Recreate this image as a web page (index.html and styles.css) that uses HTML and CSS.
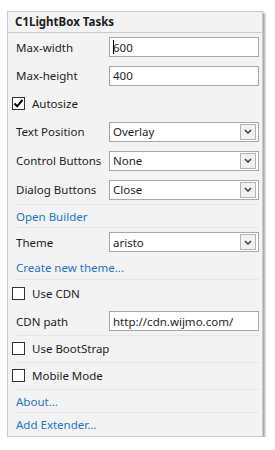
FILE: index.html
```html
<!DOCTYPE html>
<html lang="en">

<head>
  <meta charset="UTF-8">
  <meta name="viewport" content="width=device-width, initial-scale=1.0">
  <title>C1LightBox Tasks</title>
  <link rel="stylesheet" href="styles.css">
</head>

<body>
  <div class="panel">
    <div class="panel-header">C1LightBox Tasks</div>

    <!-- Size and buttons -->
    <div class="group">
      <div class="row row-first">
        <span class="label">Max-width</span>
        <div class="textbox"><span class="caret"></span>600</div>
      </div>
      <div class="row">
        <span class="label">Max-height</span>
        <div class="textbox">400</div>
      </div>
      <div class="row row-check row-autosize">
        <span class="checkbox checked">
          <svg width="11" height="11" viewBox="0 0 11 11"><path d="M1.5 5.5 L4.2 8.3 L9.5 1.8" fill="none" stroke="#000" stroke-width="2"/></svg>
        </span>
        <span>Autosize</span>
      </div>
      <div class="row">
        <span class="label">Text Position</span>
        <div class="select">Overlay<span class="drop"><svg width="8" height="5" viewBox="0 0 8 5"><path d="M1 1 L4 4 L7 1" fill="none" stroke="#444" stroke-width="1.6"/></svg></span></div>
      </div>
      <div class="row">
        <span class="label">Control Buttons</span>
        <div class="select">None<span class="drop"><svg width="8" height="5" viewBox="0 0 8 5"><path d="M1 1 L4 4 L7 1" fill="none" stroke="#444" stroke-width="1.6"/></svg></span></div>
      </div>
      <div class="row">
        <span class="label">Dialog Buttons</span>
        <div class="select">Close<span class="drop"><svg width="8" height="5" viewBox="0 0 8 5"><path d="M1 1 L4 4 L7 1" fill="none" stroke="#444" stroke-width="1.6"/></svg></span></div>
      </div>
    </div>

    <div class="group">
      <a class="row row-link link-builder" href="#">Open Builder</a>
    </div>

    <!-- Theme -->
    <div class="group">
      <div class="row row-theme">
        <span class="label">Theme</span>
        <div class="select">aristo<span class="drop"><svg width="8" height="5" viewBox="0 0 8 5"><path d="M1 1 L4 4 L7 1" fill="none" stroke="#444" stroke-width="1.6"/></svg></span></div>
      </div>
      <a class="row row-link link-theme" href="#">Create new theme...</a>
    </div>

    <!-- CDN -->
    <div class="group">
      <div class="row row-check row-cdn">
        <span class="checkbox"></span>
        <span>Use CDN</span>
      </div>
      <div class="row row-path">
        <span class="label">CDN path</span>
        <div class="textbox">http://cdn.wijmo.com/</div>
      </div>
    </div>

    <div class="group">
      <div class="row row-check row-single">
        <span class="checkbox"></span>
        <span>Use BootStrap</span>
      </div>
    </div>

    <div class="group">
      <div class="row row-check row-single">
        <span class="checkbox"></span>
        <span>Mobile Mode</span>
      </div>
    </div>

    <div class="group">
      <a class="row row-link link-about" href="#">About...</a>
    </div>

    <div class="group group-last">
      <a class="row row-link link-last" href="#">Add Extender...</a>
    </div>
  </div>
</body>

</html>
```

FILE: styles.css
```css
body {
  margin: 0;
  padding: 0;
  background-color: #ffffff;
  font-family: 'Noto Sans', 'Open Sans', sans-serif;
  font-size: 11.5px;
  color: #1e1e1e;
}

.panel {
  margin: 11px 0 0 7px;
  width: 256px;
  height: 426px;
  box-sizing: border-box;
  background-color: #f3f3f3;
  border: 1px solid #c9cad3;
  box-shadow: 2px 2px 2px rgba(0, 0, 0, 0.35);
  display: flex;
  flex-direction: column;
}

.panel-header {
  height: 20px;
  line-height: 20px;
  padding-left: 7px;
  font-weight: bold;
  border-bottom: 1px solid #c9cad3;
}

.group {
  margin: 0 3px 0 8px;
  border-bottom: 1px solid #e6e6e9;
  display: flex;
  flex-direction: column;
}

.group-last {
  border-bottom: none;
}

.row {
  height: 29px;
  display: flex;
  align-items: center;
}

.row-first {
  height: 28px;
}

.row-autosize {
  height: 27px;
}

.row-theme {
  height: 28px;
}

.row-path {
  height: 28px;
}

.label {
  width: 93px;
  flex-shrink: 0;
}

.textbox,
.select {
  flex: 1;
  height: 20px;
  box-sizing: border-box;
  border: 1px solid #a8a8a8;
  background-color: #ffffff;
  padding-left: 3px;
  display: flex;
  align-items: center;
  position: relative;
}

.caret {
  display: inline-block;
  width: 1px;
  height: 14px;
  background-color: #000000;
  margin-right: -1px;
}

.drop {
  position: absolute;
  right: 2px;
  top: 1px;
  width: 16px;
  height: 16px;
  box-sizing: border-box;
  border: 1px solid #b4b4b4;
  background-color: #f1f1f1;
  display: flex;
  align-items: center;
  justify-content: center;
}

.row-check {
  margin-left: -4px;
}

.row-single {
  height: 26px;
  padding-bottom: 2px;
  box-sizing: border-box;
}

.row-cdn {
  height: 27px;
}

.checkbox {
  width: 13px;
  height: 13px;
  box-sizing: border-box;
  border: 1px solid #333333;
  background-color: #ffffff;
  margin-right: 7px;
  display: flex;
  align-items: center;
  justify-content: center;
}

.row-link {
  color: #1e74d0;
  text-decoration: none;
}

.link-builder {
  height: 22px;
}

.link-theme {
  height: 23px;
}

.link-about {
  height: 22px;
}

.link-last {
  height: 23px;
}
```
